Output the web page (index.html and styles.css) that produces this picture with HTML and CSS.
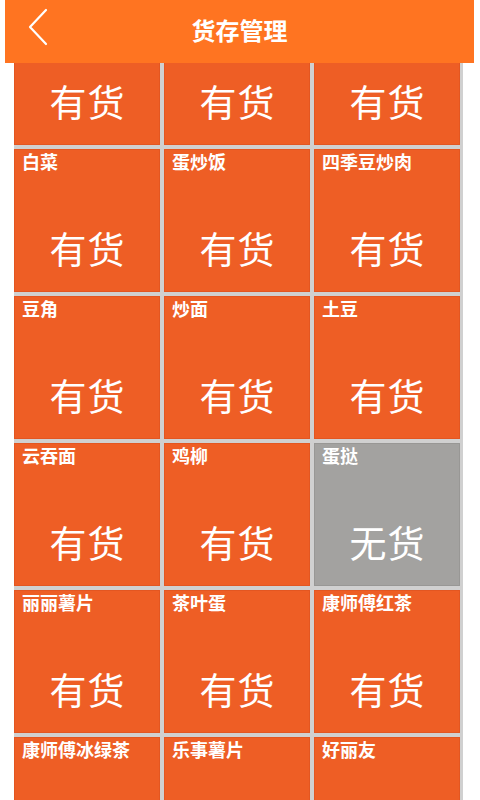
FILE: index.html
```html
<!DOCTYPE html>
<html>
<head>
  <meta charset="utf-8">
  <meta name="viewport" content="width=device-width, initial-scale=1.0">
  <title>货存管理</title>
  <link rel="stylesheet" href="styles.css">
</head>
<body>
  <header class="topbar">
    <a href="#" class="back">
      <svg width="24" height="40" viewBox="0 0 24 40">
        <polyline points="18,3 2,20 18,37" fill="none" stroke="#fff" stroke-width="2.2" stroke-linecap="round" stroke-linejoin="round"/>
      </svg>
    </a>
    <h1 class="title">货存管理</h1>
  </header>

  <div class="content">
    <div class="stock">
      <!-- first row is scrolled under the bar -->
      <div class="item"><span class="name"></span><span class="state">有货</span></div>
      <div class="item"><span class="name"></span><span class="state">有货</span></div>
      <div class="item"><span class="name"></span><span class="state">有货</span></div>

      <div class="item"><span class="name">白菜</span><span class="state">有货</span></div>
      <div class="item"><span class="name">蛋炒饭</span><span class="state">有货</span></div>
      <div class="item"><span class="name">四季豆炒肉</span><span class="state">有货</span></div>

      <div class="item"><span class="name">豆角</span><span class="state">有货</span></div>
      <div class="item"><span class="name">炒面</span><span class="state">有货</span></div>
      <div class="item"><span class="name">土豆</span><span class="state">有货</span></div>

      <div class="item"><span class="name">云吞面</span><span class="state">有货</span></div>
      <div class="item"><span class="name">鸡柳</span><span class="state">有货</span></div>
      <div class="item out"><span class="name">蛋挞</span><span class="state">无货</span></div>

      <div class="item"><span class="name">丽丽薯片</span><span class="state">有货</span></div>
      <div class="item"><span class="name">茶叶蛋</span><span class="state">有货</span></div>
      <div class="item"><span class="name">康师傅红茶</span><span class="state">有货</span></div>

      <div class="item"><span class="name">康师傅冰绿茶</span><span class="state">有货</span></div>
      <div class="item"><span class="name">乐事薯片</span><span class="state">有货</span></div>
      <div class="item"><span class="name">好丽友</span><span class="state">有货</span></div>
    </div>
  </div>
</body>
</html>
```

FILE: styles.css
```css
html, body { margin: 0; padding: 0; height: 800px; overflow: hidden; background: #fff; }
body { font-family: "Noto Sans CJK SC", "Noto Sans", sans-serif; color: #fff; }

.topbar { position: relative; z-index: 2; margin: 0 6px 0 5px; height: 63px; background: #ff7421; display: flex; align-items: center; justify-content: center; }
.back { position: absolute; left: 23px; top: 7px; display: block; }
.back svg { display: block; }
.title { margin: 0 0 4px; font-size: 24px; font-weight: bold; line-height: 30px; }

/* list is scrolled a bit, first row sits under the bar */
.content { height: 737px; overflow: hidden; }
.stock { display: grid; grid-template-columns: repeat(3, 146px); grid-auto-rows: 143px; column-gap: 4px; row-gap: 4px; width: fit-content; margin: -61px 0 0 14px; padding: 0 3px 4px 0; background: #d0d0d0; }
.item { background: #ee5e25; border: 1px solid #e35621; box-sizing: border-box; display: flex; flex-direction: column; align-items: stretch; }
.item.out { background: #a3a2a0; border-color: #989795; }
.name { padding: 1px 0 0 7px; font-size: 18px; font-weight: bold; line-height: 21px; height: 21px; white-space: nowrap; }
.state { margin-top: 56px; text-align: center; font-size: 37px; line-height: 40px; letter-spacing: 1px; text-indent: 1px; }
```
